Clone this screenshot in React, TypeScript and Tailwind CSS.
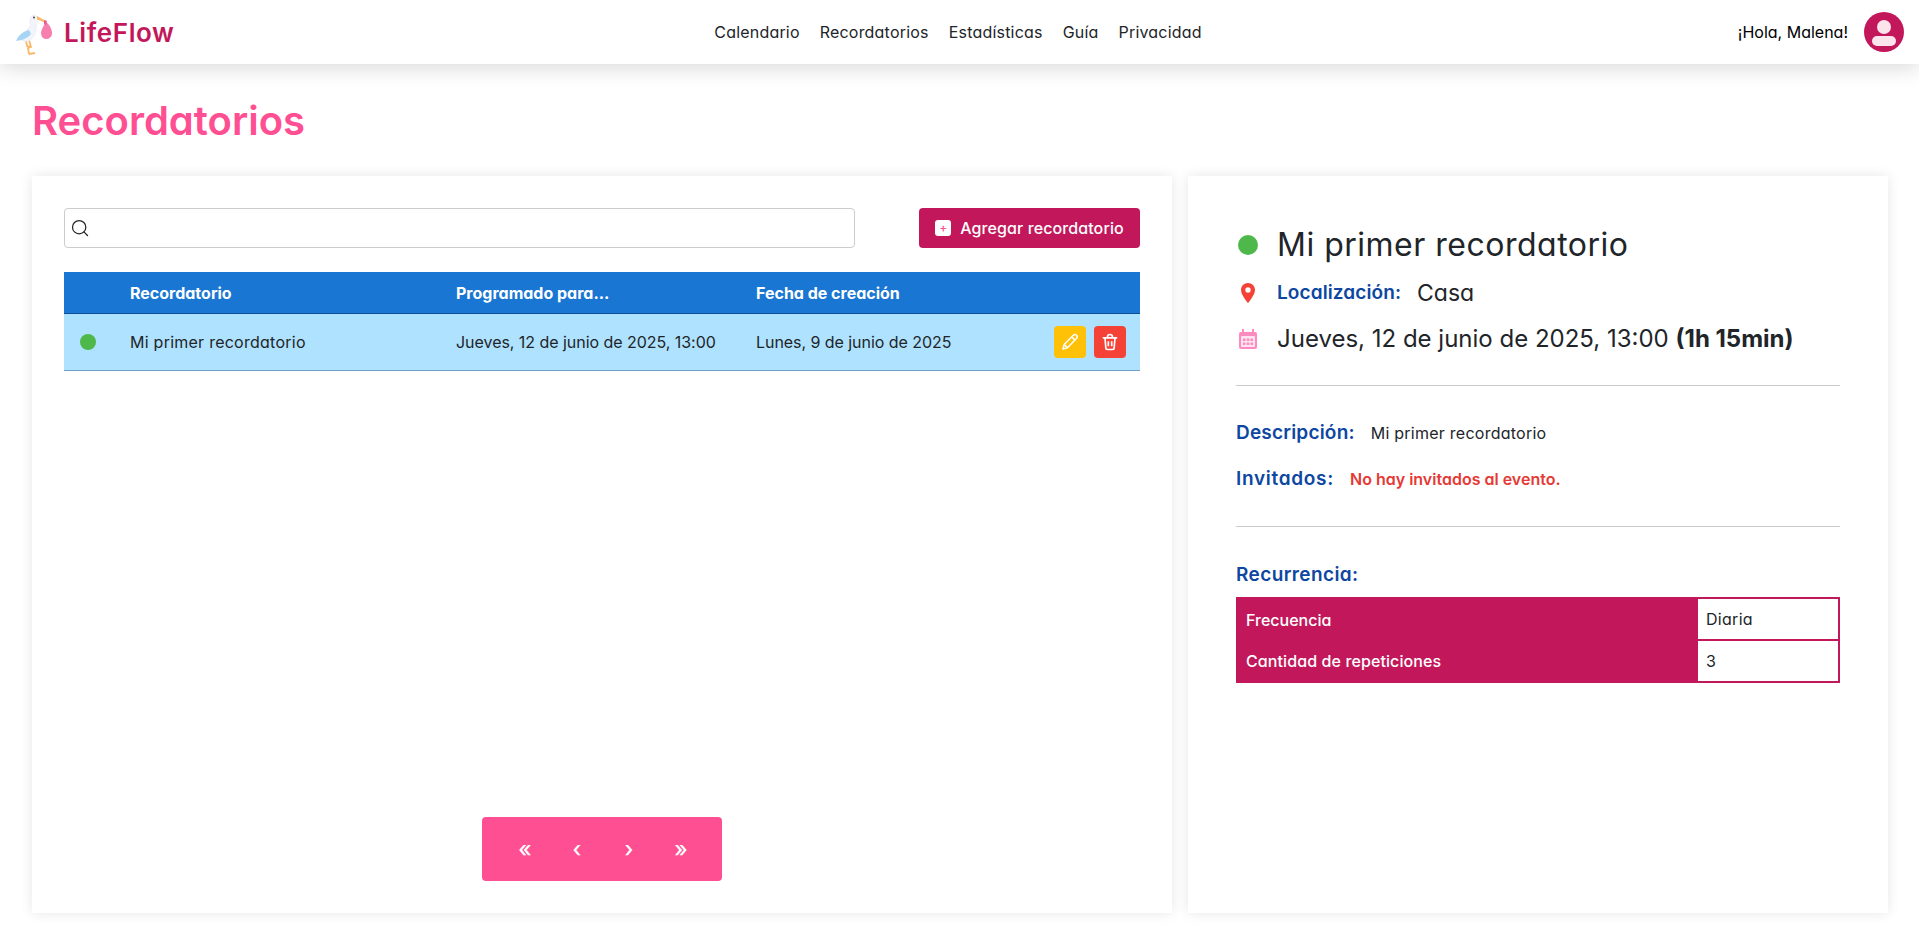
import { Search } from "lucide-react";

const Stork = () => (
  <svg width="50" height="50" viewBox="0 0 50 50" className="shrink-0">
    <path d="M19 33l2 7-3 1 1 6M19 47l6-1M16 34l1 5 4 1" fill="none" stroke="#fbb868" strokeWidth="1.8" />
    <path d="M11 33c3-6 7-12 10-15-1-1-1-3-1-5 0-3 2-5 4-5s4 2 4 4c0 2-2 5-2 9 0 6-3 11-7 13-4 1-6 0-8-1z" fill="#f1f5fa" stroke="#e8dff0" strokeWidth="0.5" />
    <path d="M6 34c2-5 6-9 13-11l2 4c-2 3-7 6-15 7z" fill="#a7d3f5" />
    <circle cx="24" cy="10.5" r="0.9" fill="#333" />
    <path d="M27 9l9 5-1 1.5-8-3z" fill="#fbb868" />
    <path d="M36 15c3 2 6 7 6 11s-3 6-6 6-5-3-5-6 3-8 5-11z" fill="#f77fae" />
    <path d="M34 13l3 1-1 4-2-1z" fill="#e65b93" />
  </svg>
);

const PinIcon = () => (
  <svg width="24" height="20" viewBox="2 2 20 20">
    <path
      fillRule="evenodd"
      d="M12 2C8 2 5 5 5 9c0 5 7 13 7 13s7-8 7-13c0-4-3-7-7-7zm0 9.7a2.7 2.7 0 110-5.4 2.7 2.7 0 010 5.4z"
      fill="#f44336"
    />
  </svg>
);

const CalendarIcon = () => (
  <svg width="18" height="20" viewBox="0 0 18 20">
    <path d="M3 0h2v3H3zM13 0h2v3h-2z" fill="#ff8ac0" />
    <rect y="3" width="18" height="17" rx="2" fill="#ff8ac0" />
    <rect x="2" y="7" width="14" height="11" rx="1" fill="#ffe3f0" />
    <path d="M4 9.5h2.5V12H4zM7.8 9.5h2.5V12H7.8zM11.5 9.5H14V12h-2.5zM4 13.5h2.5V16H4zM7.8 13.5h2.5V16H7.8zM11.5 13.5H14V16h-2.5z" fill="#ff8ac0" />
  </svg>
);

const PencilIcon = () => (
  <svg width="20" height="20" viewBox="0 0 24 24" fill="none" stroke="#fff" strokeWidth="1.8" strokeLinejoin="round">
    <path d="M3.5 20.5l1.5-5.5L16 4a2.6 2.6 0 013.9 3.6L9 18.8z" />
    <path d="M14 6l4 3.8M5 15l4 3.8" />
  </svg>
);

const TrashIcon = () => (
  <svg width="20" height="20" viewBox="0 0 24 24" fill="none" stroke="#fff" strokeWidth="2" strokeLinecap="round">
    <path d="M4 7h16M9 6c0-4 6-4 6 0" />
    <path d="M6 7l1 12a2 2 0 002 2h6a2 2 0 002-2l1-12" />
    <path d="M10 11v6M14 11v6" strokeLinecap="butt" />
  </svg>
);

const navLinks = ["Calendario", "Recordatorios", "Estadísticas", "Guía", "Privacidad"];

export default function App() {
  return (
    <div className="min-h-[943px] bg-white font-['Inter',sans-serif] text-[#212529] [font-feature-settings:'cv11']">
      <nav className="relative flex h-16 items-center justify-between bg-white pl-[10px] pr-[15px] shadow-[0_4px_20px_rgba(0,0,0,0.15)]">
        <div className="flex w-[300px] items-center gap-1">
          <Stork />
          <span className="text-[26px] font-semibold tracking-[0.6px] text-[#c2185b]">LifeFlow</span>
        </div>
        <ul className="ml-[2px] flex gap-5 text-base tracking-[0.2px] text-[#212529]">
          {navLinks.map((link) => (
            <li key={link}>{link}</li>
          ))}
        </ul>
        <div className="flex w-[300px] items-center justify-end gap-4">
          <span className="text-base text-black">¡Hola, Malena!</span>
          <div className="relative h-10 w-10 overflow-hidden rounded-full bg-[#c2185b]">
            <span className="absolute left-[13px] top-[8px] h-[14px] w-[14px] rounded-full bg-[#fce4ec]" />
            <span className="absolute left-[8px] top-[24px] h-[10px] w-6 rounded-[5px] bg-[#fce4ec]" />
          </div>
        </div>
      </nav>

      <main className="px-8">
        <h1 className="pb-[30px] pt-[32px] text-[40px] font-semibold leading-[50px] text-[#ff4f93]">
          Recordatorios
        </h1>
        <div className="grid grid-cols-[1140px_700px] gap-4">
          <section className="flex h-[737px] flex-col bg-white px-8 pt-8 shadow-[0_0_12px_rgba(0,0,0,0.1)]">
            <div className="flex items-center justify-between">
              <div className="flex h-10 w-[791px] items-center rounded border border-[#ccc] px-[5px]">
                <Search size={20} strokeWidth={1.5} className="text-[#212529]" />
              </div>
              <button className="flex h-10 w-[221px] items-center justify-center gap-[9px] rounded bg-[#c2185b] text-base font-medium tracking-[0.1px] text-white">
                <span className="flex h-4 w-4 items-center justify-center rounded-[3px] bg-white text-xs leading-none text-[#ff4f93]">+</span>
                Agregar recordatorio
              </button>
            </div>

            <table className="mt-6 w-full table-fixed border-collapse text-left text-base">
              <thead>
                <tr className="h-[41px] border-b border-[#0d4f94] bg-[#1976d2] text-white">
                  <th className="w-[66px]" />
                  <th className="w-[326px] pt-[2px] font-bold">Recordatorio</th>
                  <th className="w-[300px] pt-[2px] font-bold">Programado para...</th>
                  <th className="pt-[2px] font-bold">Fecha de creación</th>
                  <th className="w-[90px]" />
                </tr>
              </thead>
              <tbody>
                <tr className="h-[57px] border-b border-[#6fa0c4] bg-[#aee2ff]">
                  <td className="pl-4">
                    <span className="block h-4 w-4 rounded-full bg-[#4fb84a]" />
                  </td>
                  <td className="tracking-[0.25px]">Mi primer recordatorio</td>
                  <td className="whitespace-nowrap tracking-[-0.04px]">Jueves, 12 de junio de 2025, 13:00</td>
                  <td className="whitespace-nowrap tracking-[-0.05px]">Lunes, 9 de junio de 2025</td>
                  <td>
                    <div className="flex justify-end gap-2 pr-[14px]">
                      <button className="flex h-8 w-8 items-center justify-center rounded bg-[#ffc107]">
                        <PencilIcon />
                      </button>
                      <button className="flex h-8 w-8 items-center justify-center rounded bg-[#f44336]">
                        <TrashIcon />
                      </button>
                    </div>
                  </td>
                </tr>
              </tbody>
            </table>

            <div className="mb-8 mt-auto flex justify-center">
              <div className="flex h-16 w-60 items-center justify-center rounded bg-[#ff4f93] pl-[2px] text-[22px] font-medium text-white">
                <span className="w-[52px] text-center">«</span>
                <span className="w-[52px] text-center">‹</span>
                <span className="w-[52px] text-center">›</span>
                <span className="w-[52px] text-center">»</span>
              </div>
            </div>
          </section>

          <section className="h-[737px] bg-white px-12 pt-[49px] shadow-[0_0_12px_rgba(0,0,0,0.1)]">
            <div className="flex h-10 items-center gap-[17px]">
              <span className="ml-[2px] mr-[2px] h-5 w-5 rounded-full bg-[#4fb84a]" />
              <h2 className="text-[32px] leading-10 tracking-[0.5px]">Mi primer recordatorio</h2>
            </div>
            <div className="mt-3 flex h-8 items-center gap-[17px]">
              <PinIcon />
              <span className="text-[19px] font-semibold tracking-[0.1px] text-[#0d47a1]">Localización:</span>
              <span className="ml-[-1px] text-[23px]">Casa</span>
            </div>
            <div className="mt-[14px] flex h-8 items-center gap-[17px]">
              <span className="flex w-6 justify-center">
                <CalendarIcon />
              </span>
              <span className="text-2xl">
                Jueves, 12 de junio de 2025, 13:00 <b className="font-bold">(1h 15min)</b>
              </span>
            </div>
            <hr className="mt-[30px] border-[#ccc]" />
            <div className="mt-[31px] flex h-8 items-center gap-4">
              <span className="text-[19px] font-semibold tracking-[0.2px] text-[#0d47a1]">Descripción:</span>
              <span className="text-base tracking-[0.25px]">Mi primer recordatorio</span>
            </div>
            <div className="mt-[14px] flex h-8 items-center gap-4">
              <span className="text-[19px] font-semibold tracking-[0.7px] text-[#0d47a1]">Invitados:</span>
              <span className="text-base font-semibold text-[#e53935]">No hay invitados al evento.</span>
            </div>
            <hr className="mt-[31px] border-[#ccc]" />
            <h3 className="mt-8 flex h-8 items-center text-[19px] font-semibold tracking-[0.4px] text-[#0d47a1]">Recurrencia:</h3>
            <table className="mt-[6px] w-full table-fixed border-collapse border-2 border-[#c2185b] text-base">
              <tbody>
                <tr className="h-[42px]">
                  <th className="bg-[#c2185b] pl-2 text-left font-medium text-white">Frecuencia</th>
                  <td className="w-[142px] border-2 border-[#c2185b] pl-2 tracking-[0.3px]">Diaria</td>
                </tr>
                <tr className="h-[42px]">
                  <th className="bg-[#c2185b] pl-2 text-left font-medium tracking-[0.1px] text-white">Cantidad de repeticiones</th>
                  <td className="w-[142px] border-2 border-[#c2185b] pl-2">3</td>
                </tr>
              </tbody>
            </table>
          </section>
        </div>
      </main>
    </div>
  );
}
